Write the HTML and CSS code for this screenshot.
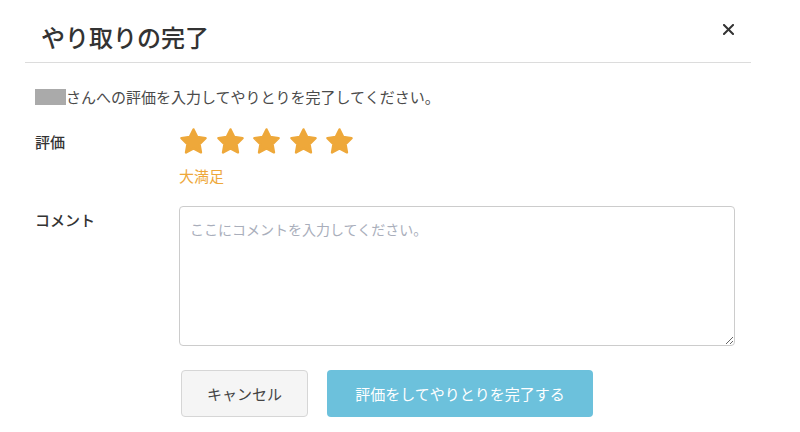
FILE: index.html
```html
<!DOCTYPE html>
<html lang="ja">
<head>
<meta charset="utf-8">
<title>やり取りの完了</title>
<link rel="stylesheet" href="styles.css">
</head>
<body>
<div class="modal">
  <div class="modal-header">
    <h1 class="modal-title">やり取りの完了</h1>
    <button class="close" aria-label="閉じる">
      <svg width="11" height="11" viewBox="0 0 11 11"><path d="M1 1 L10 10 M10 1 L1 10" stroke="#333" stroke-width="2" stroke-linecap="square"/></svg>
    </button>
  </div>
  <div class="modal-body">
    <p class="lead"><span class="masked"></span>さんへの評価を入力してやりとりを完了してください。</p>
    <div class="row rating-row">
      <div class="label">評価</div>
      <div class="field">
        <div class="stars">
          <svg class="star" viewBox="0 0 24 24"><polygon points="12,2 15.09,8.26 22,9.27 17,14.14 18.18,21.02 12,17.77 5.82,21.02 7,14.14 2,9.27 8.91,8.26"/></svg>
          <svg class="star" viewBox="0 0 24 24"><polygon points="12,2 15.09,8.26 22,9.27 17,14.14 18.18,21.02 12,17.77 5.82,21.02 7,14.14 2,9.27 8.91,8.26"/></svg>
          <svg class="star" viewBox="0 0 24 24"><polygon points="12,2 15.09,8.26 22,9.27 17,14.14 18.18,21.02 12,17.77 5.82,21.02 7,14.14 2,9.27 8.91,8.26"/></svg>
          <svg class="star" viewBox="0 0 24 24"><polygon points="12,2 15.09,8.26 22,9.27 17,14.14 18.18,21.02 12,17.77 5.82,21.02 7,14.14 2,9.27 8.91,8.26"/></svg>
          <svg class="star" viewBox="0 0 24 24"><polygon points="12,2 15.09,8.26 22,9.27 17,14.14 18.18,21.02 12,17.77 5.82,21.02 7,14.14 2,9.27 8.91,8.26"/></svg>
        </div>
        <div class="rating-text">大満足</div>
      </div>
    </div>
    <div class="row comment-row">
      <div class="label label-comment">コメント</div>
      <div class="field">
        <textarea class="comment" placeholder="ここにコメントを入力してください。"></textarea>
      </div>
    </div>
    <div class="actions">
      <button class="btn btn-cancel">キャンセル</button>
      <button class="btn btn-primary">評価をしてやりとりを完了する</button>
    </div>
  </div>
</div>
</body>
</html>
```
FILE: styles.css
```css
html, body {
  margin: 0;
  padding: 0;
  background: #fff;
}
body {
  font-family: "Noto Sans CJK JP", "Noto Sans", sans-serif;
  color: #444;
}
.modal {
  width: 726px;
  margin-left: 25px;
}
.modal-header {
  display: flex;
  align-items: flex-start;
  justify-content: space-between;
  height: 63px;
  box-sizing: border-box;
  padding: 22px 17px 0 16px;
  border-bottom: 1px solid #dcdcdc;
}
.modal-title {
  margin: 0;
  font-size: 24px;
  line-height: 30px;
  font-weight: 500;
  color: #333;
}
.close {
  border: 0;
  background: none;
  padding: 0;
  margin-top: 2px;
  width: 11px;
  height: 11px;
  display: block;
}
.close svg {
  display: block;
}
.modal-body {
  padding-left: 10px;
}
.lead {
  margin: 23px 0 0;
  font-size: 15px;
  line-height: 22px;
  color: #4a4a4a;
}
.masked {
  display: inline-block;
  width: 31px;
  height: 16px;
  background: #aaa;
  vertical-align: -2px;
}
.row {
  display: flex;
}
.label {
  width: 144px;
  flex: none;
  font-size: 15px;
  font-weight: 500;
  color: #333;
  line-height: 22px;
}
.rating-row {
  margin-top: 19px;
}
.rating-row .label {
  padding-top: 4px;
}
.stars {
  display: flex;
  gap: 7.5px;
  height: 29px;
}
.star {
  width: 29px;
  height: 29px;
  display: block;
}
.star polygon {
  fill: #eea83a;
  stroke: #eea83a;
  stroke-width: 2;
  stroke-linejoin: round;
}
.rating-text {
  margin-top: 9px;
  font-size: 15px;
  line-height: 22px;
  color: #eea83a;
}
.comment-row {
  margin-top: 19px;
}
.label-comment {
  padding-top: 3px;
}
.comment {
  display: block;
  width: 556px;
  height: 140px;
  box-sizing: border-box;
  border: 1px solid #ccc;
  border-radius: 4px;
  padding: 12px 10px;
  font-family: "Noto Sans CJK JP", "Noto Sans", sans-serif;
  font-size: 14px;
  line-height: 20px;
  color: #333;
  resize: both;
}
.comment::placeholder {
  color: #a9aebb;
}
.actions {
  display: flex;
  gap: 19px;
  margin-top: 24px;
  padding-left: 146px;
}
.btn {
  height: 47px;
  border-radius: 4px;
  font-family: "Noto Sans CJK JP", "Noto Sans", sans-serif;
  font-size: 15px;
  padding: 0;
}
.btn-cancel {
  width: 127px;
  background: #f5f5f5;
  border: 1px solid #d6d6d6;
  color: #444;
}
.btn-primary {
  width: 266px;
  background: #6cc1dc;
  border: 0;
  color: #fff;
}
```
